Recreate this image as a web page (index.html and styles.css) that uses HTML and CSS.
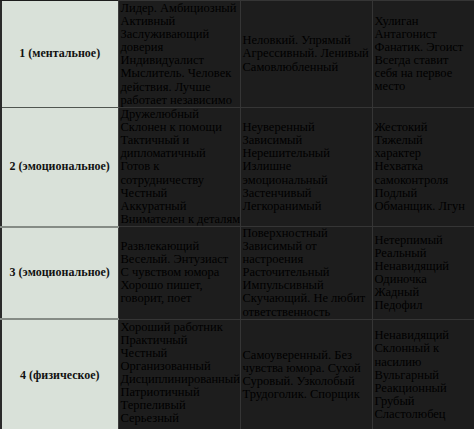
FILE: index.html
```html
<!DOCTYPE html>
<html lang="ru">
<head>
<meta charset="utf-8">
<link rel="stylesheet" href="styles.css">
</head>
<body>
<table class="grid">
  <colgroup>
    <col class="c1"><col class="c2"><col class="c3"><col class="c4">
  </colgroup>
  <tr class="r1">
    <th class="label">1 (ментальное)</th>
    <td class="cell top">Лидер. Амбициозный<br>Активный<br>Заслуживающий<br>доверия<br>Индивидуалист<br>Мыслитель. Человек<br>действия. Лучше<br>работает независимо</td>
    <td class="cell">Неловкий. Упрямый<br>Агрессивный. Ленивый<br>Самовлюбленный</td>
    <td class="cell">Хулиган<br>Антагонист<br>Фанатик. Эгоист<br>Всегда ставит<br>себя на первое<br>место</td>
  </tr>
  <tr class="r2">
    <th class="label">2 (эмоциональное)</th>
    <td class="cell">Дружелюбный<br>Склонен к помощи<br>Тактичный и<br>дипломатичный<br>Готов к<br>сотрудничеству<br>Честный<br>Аккуратный<br>Внимателен к деталям</td>
    <td class="cell">Неуверенный<br>Зависимый<br>Нерешительный<br>Излишне<br>эмоциональный<br>Застенчивый<br>Легкоранимый</td>
    <td class="cell">Жестокий<br>Тяжелый<br>характер<br>Нехватка<br>самоконтроля<br>Подлый<br>Обманщик. Лгун</td>
  </tr>
  <tr class="r3">
    <th class="label">3 (эмоциональное)</th>
    <td class="cell">Развлекающий<br>Веселый. Энтузиаст<br>С чувством юмора<br>Хорошо пишет,<br>говорит, поет</td>
    <td class="cell">Поверхностный<br>Зависимый от<br>настроения<br>Расточительный<br>Импульсивный<br>Скучающий. Не любит<br>ответственность</td>
    <td class="cell">Нетерпимый<br>Реальный<br>Ненавидящий<br>Одиночка<br>Жадный<br>Педофил</td>
  </tr>
  <tr class="r4">
    <th class="label">4 (физическое)</th>
    <td class="cell top">Хороший работник<br>Практичный<br>Честный<br>Организованный<br>Дисциплинированный<br>Патриотичный<br>Терпеливый<br>Серьезный</td>
    <td class="cell">Самоуверенный. Без<br>чувства юмора. Сухой<br>Суровый. Узколобый<br>Трудоголик. Спорщик</td>
    <td class="cell">Ненавидящий<br>Склонный к<br>насилию<br>Вульгарный<br>Реакционный<br>Грубый<br>Сластолюбец</td>
  </tr>
</table>
</body>
</html>
```
FILE: styles.css
```css
html, body {
  margin: 0;
  padding: 0;
  background: #1c1c1c;
  overflow: hidden;
  font-family: "Liberation Serif", "Times New Roman", "DejaVu Serif", serif;
}
body {
  width: 474px;
  height: 429px;
}
.grid {
  border-collapse: collapse;
  table-layout: fixed;
  width: 474px;
  border-left: 2px solid #2a2a2a;
}
.c1 { width: 117px; }
.c2 { width: 122px; }
.c3 { width: 132px; }
.c4 { width: 103px; }
.cell {
  background: transparent;
  box-shadow: inset 0 0 0 300px #1d1d1d;
  color: #000000;
  font-size: 12.5px;
  line-height: 13.1px;
  padding: 0 2px;
  vertical-align: middle;
  border: 1px solid #353535;
  white-space: nowrap;
  overflow: hidden;
}
.top {
  vertical-align: top;
  padding-top: 1px;
}
.label {
  background: #d9e1d9;
  color: #111111;
  font-size: 12px;
  font-weight: bold;
  text-align: center;
  vertical-align: middle;
  padding: 0;
  border-right: 1px solid #3a3a3a;
  border-bottom: 2px solid #858b85;
}
.r1 { height: 107px; }
.r1 .label { border-bottom: 1px solid #505550; }
.r2 { height: 119px; }
.r3 { height: 92px; }
.r4 { height: 112px; }
```
